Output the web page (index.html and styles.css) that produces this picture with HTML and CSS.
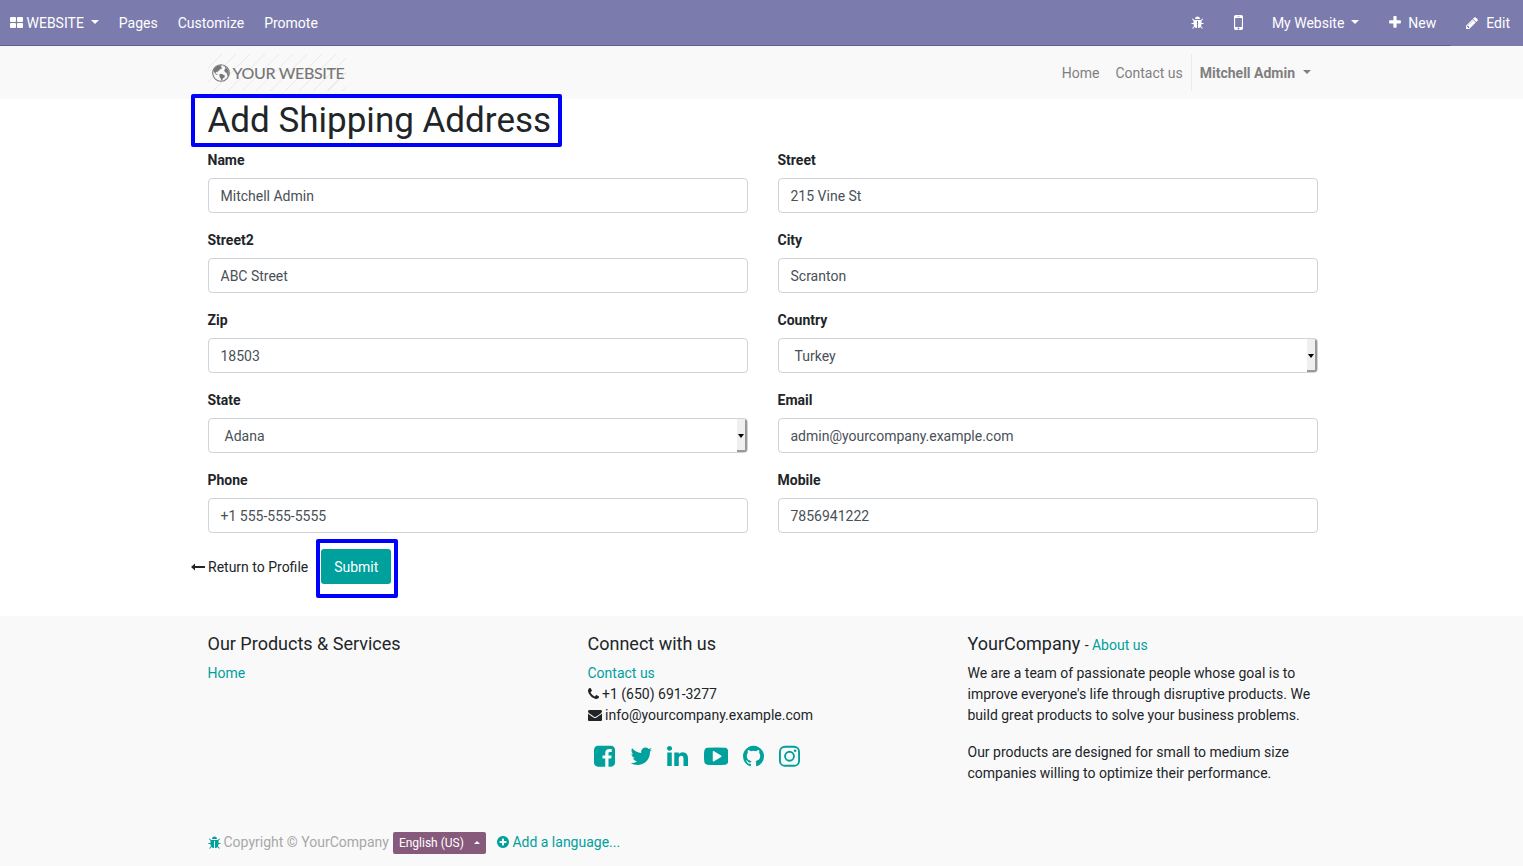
FILE: index.html
```html
<!DOCTYPE html>
<html lang="en">
<head>
<meta charset="utf-8">
<title>Add Shipping Address</title>
<link rel="stylesheet" href="styles.css">
</head>
<body>
<svg class="defs" aria-hidden="true">
  <symbol id="bug" viewBox="64 0 1664 1792"><path d="M1696 960q0 26-19 45t-45 19h-224q0 171-67 290l208 209q19 19 19 45t-19 45q-18 19-45 19t-45-19l-198-197q-5 5-15 13t-42 28.5-65 36.5-82 29-97 13v-896h-128v896q-51 0-101.5-13.5t-87-33-66-39-43.5-32.5l-15-14-183 207q-20 21-48 21-24 0-43-16-19-18-20.5-44.5t15.5-46.5l202-227q-58-114-58-274h-224q-26 0-45-19t-19-45 19-45 45-19h224v-294l-173-173q-19-19-19-45t19-45 45-19 45 19l173 173h844l173-173q19-19 45-19t45 19 19 45-19 45l-173 173v294h224q26 0 45 19t19 45zm-480-576h-640q0-133 93.5-226.5t226.5-93.5 226.5 93.5 93.5 226.5z"/></symbol>
</svg>

<nav class="topbar">
  <div class="topbar-menu">
    <a class="brand"><svg class="icon-grid" viewBox="0 0 13 11"><rect width="6" height="5" rx=".9"/><rect x="7" width="6" height="5" rx=".9"/><rect y="6" width="6" height="5" rx=".9"/><rect x="7" y="6" width="6" height="5" rx=".9"/></svg><span>WEBSITE</span><i class="caret"></i></a>
    <a>Pages</a><a>Customize</a><a>Promote</a>
  </div>
  <div class="topbar-tools">
    <a class="tool-bug"><svg class="icon-bug"><use href="#bug"/></svg></a>
    <a class="tool-mobile"><svg class="icon-mobile" viewBox="512 0 768 1792"><path d="M976 1408q0-33-23.5-56.5t-56.5-23.5-56.5 23.5-23.5 56.5 23.5 56.5 56.5 23.5 56.5-23.5 23.5-56.5zm208-160v-704q0-13-9.5-22.5t-22.5-9.5h-512q-13 0-22.5 9.5t-9.5 22.5v704q0 13 9.5 22.5t22.5 9.5h512q13 0 22.5-9.5t9.5-22.5zm-192-848q0-16-16-16h-160q-16 0-16 16t16 16h160q16 0 16-16zm288-16v1024q0 52-38 90t-90 38h-512q-52 0-90-38t-38-90v-1024q0-52 38-90t90-38h512q52 0 90 38t38 90z"/></svg></a>
    <a class="tool-site">My Website<i class="caret"></i></a>
    <a class="tool-new"><svg class="icon-plus" viewBox="192 0 1408 1792"><path d="M1600 736v192q0 40-28 68t-68 28h-416v416q0 40-28 68t-68 28h-192q-40 0-68-28t-28-68v-416h-416q-40 0-68-28t-28-68v-192q0-40 28-68t68-28h416v-416q0-40 28-68t68-28h192q40 0 68 28t28 68v416h416q40 0 68 28t28 68z"/></svg>New</a>
    <a class="tool-edit"><svg class="icon-pencil" viewBox="128 0 1536 1792"><path d="M491 1536l91-91-235-235-91 91v107h128v128h107zm523-928q0-22-22-22-10 0-17 7l-542 542q-7 7-7 17 0 22 22 22 10 0 17-7l542-542q7-7 7-17zm-54-192l416 416-832 832h-416v-416zm683 96q0 53-37 90l-166 166-416-416 166-165q36-38 90-38 53 0 91 38l235 234q37 39 37 91z"/></svg>Edit</a>
  </div>
</nav>

<header class="header">
  <div class="container header-row">
    <a class="logo">
      <svg class="globe" viewBox="0 0 18 18"><circle cx="9" cy="9" r="8.3" fill="none" stroke="#777" stroke-width="1.1"/><path d="M2.200 4.600 5 1.900l3.600-.8 1 .9-1.100.9 1.500.5-.4 1.400-1.800.4-.7 1.300-1.500.8.2 1-1.100-.5-1.100.6.3 1.300 1.400.3.6 1.100-1.200-.3-1.800-1.200L1.800 7.500z"/><path d="M7.300 10.400l1.500-.6 2.300.8 1.900 1.100-.6 1.700-1.400.8-.6 1.500-1.100 1-.5-2.300-1.200-1.400z"/><path d="M12.300 2l2.700 2.200 1.500 3 .3 3-1 2.400-.8-1.900-.2-1.800-1.300-.5-1.200-1.500.3-1.700 1.200-.8-.9-.8z"/></svg>
      <span>YOUR WEBSITE</span>
    </a>
    <div class="nav">
      <a>Home</a><a>Contact us</a><a class="user">Mitchell Admin<i class="caret"></i></a>
    </div>
  </div>
</header>

<main class="container main">
  <h1 class="title">Add Shipping Address</h1>
  <div class="form">
    <div class="group"><label>Name</label><div class="field">Mitchell Admin</div></div>
    <div class="group"><label>Street</label><div class="field">215 Vine St</div></div>
    <div class="group"><label>Street2</label><div class="field">ABC Street</div></div>
    <div class="group"><label>City</label><div class="field">Scranton</div></div>
    <div class="group"><label>Zip</label><div class="field">18503</div></div>
    <div class="group"><label>Country</label><div class="field select"><span>Turkey</span><i class="drop"></i></div></div>
    <div class="group"><label>State</label><div class="field select"><span>Adana</span><i class="drop"></i></div></div>
    <div class="group"><label>Email</label><div class="field">admin@yourcompany.example.com</div></div>
    <div class="group"><label>Phone</label><div class="field">+1 555-555-5555</div></div>
    <div class="group"><label>Mobile</label><div class="field">7856941222</div></div>
  </div>
  <div class="actions">
    <a class="back"><svg class="icon-back" viewBox="0 0 14 8"><path d="M4 .5v2.400h9.500q.5 0 .5.500v1.200q0 .5-.5.500H4v2.400L0 4z"/></svg>Return to Profile</a>
    <a class="submit">Submit</a>
  </div>
</main>

<footer class="footer">
  <div class="container">
    <div class="footer-cols">
      <section class="col">
        <h4>Our Products &amp; Services</h4>
        <a class="link">Home</a>
      </section>
      <section class="col">
        <h4>Connect with us</h4>
        <a class="link">Contact us</a>
        <div class="line"><svg class="icon-phone" viewBox="192 0 1408 1792"><path d="M1600 1240q0 27-10 70.500t-21 68.500q-21 50-122 106-94 51-186 51-27 0-53-3.500t-57.500-12.500-47-14.500-55.500-20.500-49-18q-98-35-175-83-127-79-264-216t-216-264q-48-77-83-175-3-9-18-49t-20.500-55.500-14.500-47-12.500-57.500-3.500-53q0-92 51-186 56-101 106-122 25-11 68.500-21t70.500-10q14 0 21 3 18 6 53 76 11 19 30 54t35 63.500 31 53.500q3 4 17.500 25t21.500 35.500 7 28.500q0 20-28.500 50t-62 55-62 53-28.500 46q0 9 5 22.500t8.500 20.500 14 24 11.500 19q76 137 174 235t235 174q2 1 19 11.500t24 14 20.500 8.500 22.500 5q18 0 46-28.500t53-62 55-62 50-28.500q14 0 28.500 7t35.500 21.500 25 17.500q25 15 53.500 31t63.500 35 54 30q70 35 76 53 3 7 3 21z"/></svg>+1 (650) 691-3277</div>
        <div class="line"><svg class="icon-mail" viewBox="0 0 1792 1792"><path d="M1792 710v794q0 66-47 113t-113 47h-1472q-66 0-113-47t-47-113v-794q44 49 101 87 362 246 497 345 57 42 92.500 65.500t94.500 48 110 24.500h2q51 0 110-24.500t94.500-48 92.500-65.500q170-123 498-345 57-39 100-87zm0-294q0 79-49 151t-122 123q-376 261-468 325-10 7-42.500 31t-54 38.500-52 32.500-57.500 27-50 9h-2q-23 0-50-9t-57.500-27-52-32.500-54-38.500-42.500-31q-91-64-262-182.500t-205-142.500q-62-42-117-115.500t-55-136.500q0-78 41.500-130t118.500-52h1472q65 0 112.500 47t47.500 113z"/></svg>info@yourcompany.example.com</div>
        <div class="social">
          <svg class="w-a" viewBox="128 0 1536 1792"><path d="M1376 128q119 0 203.500 84.500t84.500 203.500v960q0 119-84.500 203.500t-203.500 84.500h-188v-595h199l30-232h-229v-148q0-56 23.500-84t91.500-28l122-1v-207q-63-9-178-9-136 0-217.500 80t-81.500 226v171h-200v232h200v595h-532q-119 0-203.500-84.500t-84.500-203.500v-960q0-119 84.500-203.500t203.500-84.500h960z"/></svg>
          <svg class="w-b" viewBox="64 0 1664 1792"><path d="M1684 408q-67 98-162 167 1 14 1 42 0 130-38 259.500t-115.500 248.500-184.500 210.500-258 146-323 54.500q-271 0-496-145 35 4 78 4 225 0 401-138-105-2-188-64.500t-114-159.500q33 5 61 5 43 0 85-11-112-23-185.500-111.500t-73.500-205.500v-4q68 38 146 41-66-44-105-115t-39-154q0-88 44-163 121 149 294.500 238.500t371.500 99.500q-8-38-8-74 0-134 94.500-228.500t228.500-94.500q140 0 236 102 109-21 205-78-37 115-142 178 93-10 186-50z"/></svg>
          <svg class="w-a" viewBox="128 0 1536 1792"><path d="M477 625v991h-330v-991h330zm21-306q1 73-50.500 122t-135.500 49h-2q-82 0-132-49t-50-122q0-74 51.500-122.500t134.500-48.500 133 48.500 51 122.500zm1166 729v568h-329v-530q0-105-40.500-164.500t-126.500-59.500q-63 0-105.500 34.500t-63.500 85.500q-11 30-11 81v553h-329q2-399 2-647t-1-296l-1-48h329v144h-2q20-32 41-56t56.500-52 87-43.500 114.500-15.500q171 0 275 113.500t104 332.500z"/></svg>
          <svg class="w-c" viewBox="0 0 1792 1792"><path d="M1280 896q0-37-30-54l-512-320q-31-20-65-2-33 18-33 56v640q0 38 33 56 16 8 31 8 20 0 34-10l512-320q30-17 30-54zm512 0q0 96-1 150t-8.500 136.500-22.500 147.500q-16 73-69 123t-124 58q-222 25-671 25t-671-25q-71-8-124.500-58t-69.500-123q-14-65-21.500-147.500t-8.500-136.500-1-150 1-150 8.500-136.500 22.500-147.500q16-73 69-123t124-58q222-25 671-25t671 25q71 8 124.500 58t69.500 123q14 65 21.500 147.500t8.500 136.500 1 150z"/></svg>
          <svg class="w-a" viewBox="128 0 1536 1792"><path d="M896 128q209 0 385.500 103t279.500 279.500 103 385.500q0 251-146.500 451.500t-378.500 277.500q-27 5-40-7t-13-30q0-3 .5-76.500t.5-134.500q0-97-52-142 57-6 102.500-18t94-39 81-66.500 53-105 20.500-150.500q0-119-79-206 37-91-8-204-28-9-81 11t-92 44l-38 24q-93-26-192-26t-192 26q-16-11-42.500-27t-83.500-38.500-85-13.500q-45 113-8 204-79 87-79 206 0 85 20.500 150t52.500 105 80.500 67 94 39 102.500 18q-39 36-49 103-21 10-45 15t-57 5-65.500-21.500-55.500-62.500q-19-32-48.500-52t-49.500-24l-20-3q-21 0-29 4.500t-5 11.500 9 14 13 12l7 5q22 10 43.500 38t31.500 51l10 23q13 38 44 61.500t67 30 69.500 7 55.500-3.500l23-4q0 38 .5 88.500t.5 54.500q0 18-13 30t-40 7q-232-77-378.500-277.500t-146.500-451.500q0-209 103-385.500t279.500-279.500 385.500-103z"/></svg>
          <svg class="w-a" viewBox="128 0 1536 1792"><g fill="none" stroke="currentColor"><rect x="197" y="197" width="1398" height="1398" rx="370" stroke-width="138"/><circle cx="896" cy="896" r="325" stroke-width="138"/></g><circle cx="1306" cy="486" r="92"/></svg>
        </div>
      </section>
      <section class="col">
        <h4>YourCompany <small>- <a class="link">About us</a></small></h4>
        <p>We are a team of passionate people whose goal is to improve everyone's life through disruptive products. We build great products to solve your business problems.</p>
        <p>Our products are designed for small to medium size companies willing to optimize their performance.</p>
      </section>
    </div>
    <div class="legal">
      <svg class="icon-bug"><use href="#bug"/></svg>
      <span class="copy">Copyright © YourCompany</span>
      <span class="lang">English (US)<i class="caret up"></i></span>
      <a class="link add"><svg class="icon-add" viewBox="128 0 1536 1792"><path d="M1344 960v-128q0-26-19-45t-45-19h-256v-256q0-26-19-45t-45-19h-128q-26 0-45 19t-19 45v256h-256q-26 0-45 19t-19 45v128q0 26 19 45t45 19h256v256q0 26 19 45t45 19h128q26 0 45-19t19-45v-256h256q26 0 45-19t19-45zm320-64q0 209-103 385.500t-279.500 279.500-385.500 103-385.500-103-279.500-279.500-103-385.500 103-385.500 279.500-279.500 385.500-103 385.500 103 279.500 279.500 103 385.500z"/></svg>Add a language...</a>
    </div>
  </div>
</footer>
</body>
</html>
```

FILE: styles.css
```css
*, *::before, *::after { box-sizing: border-box; }
body {
  margin: 0;
  height: 866px;
  display: flex;
  flex-direction: column;
  overflow: hidden;
  font: 14px/21px Roboto, "Liberation Sans", sans-serif;
  color: #212529;
  background: #fff;
}
svg { fill: currentColor; flex: none; }
.defs { position: absolute; width: 0; height: 0; }
.container { width: 1110px; margin-left: 207.5px; }
.caret {
  display: inline-block;
  width: 8px;
  height: 4px;
  border: 4px solid transparent;
  border-top-color: currentColor;
  border-bottom: 0;
}
.caret.up { width: 6px; height: 3px; border: 3px solid transparent; border-top: 0; border-bottom-color: currentColor; }

/* Editor bar */
.topbar {
  position: relative;
  flex: none;
  height: 46px;
  display: flex;
  justify-content: space-between;
  align-items: center;
  padding: 0 13px 0 10px;
  color: #fff;
  background: #7c7bad;
}
.topbar::after {
  content: "";
  position: absolute;
  left: 0;
  bottom: 0;
  width: 1451px;
  height: 1px;
  background: #5f5e97;
}
.topbar-menu, .topbar-tools { display: flex; align-items: center; }
.topbar-menu { gap: 20px; }
.topbar a { display: flex; align-items: center; }
.brand .caret { margin-left: 7px; margin-top: -2px; }
.icon-grid { width: 13px; height: 11px; margin-right: 3.500px; margin-top: -1px; }
.icon-bug { width: 13px; height: 14px; }
.topbar .icon-bug { margin-top: -1px; }
.icon-mobile { width: 9px; height: 21px; margin-top: -1px; }
.tool-mobile { margin-left: 30px; }
.tool-site { margin-left: 29px; }
.tool-site .caret { margin-left: 7px; margin-top: -2px; }
.tool-new { margin-left: 29.500px; }
.icon-plus { width: 12px; height: 15px; margin-right: 7.500px; margin-top: -1px; }
.tool-edit { margin-left: 30px; }
.icon-pencil { width: 12px; height: 14px; margin-right: 8px; }

/* Site header */
.header { flex: none; height: 52.500px; background: #f9f9f9; }
.header-row { display: flex; justify-content: space-between; align-items: center; height: 100%; padding-right: 7px; }
.logo {
  display: flex;
  align-items: center;
  width: 138px;
  height: 37px;
  padding-left: 4px;
  gap: 3px;
  white-space: nowrap;
  font: 500 16px/20px Lato, sans-serif;
  letter-spacing: -.36px;
  color: #777;
  background: repeating-linear-gradient(135deg, transparent 0 9.300px, #e9e9e9 9.300px 10.100px);
}
.logo span { padding-top: 1px; }
.globe { width: 18px; height: 18px; margin-top: 1px; }
.nav { display: flex; align-items: center; color: #808080; }
.nav a { padding-top: 2px; margin-right: 16px; }
.nav a:nth-child(2) { margin-right: 8px; }
.nav .user {
  display: flex;
  align-items: center;
  height: 37px;
  margin: 0;
  padding-left: 8px;
  border-left: 1px solid #e9ecef;
  font-weight: 700;
}
.user .caret { margin-left: 7.500px; margin-top: -2px; }

/* Address form */
.main { flex: none; height: 517.500px; padding-top: 1px; }
.title {
  position: relative;
  margin: 0 0 8.500px;
  font-size: 35px;
  line-height: 42px;
  font-weight: 400;
}
.title::after, .submit::after {
  content: "";
  position: absolute;
  border: 4px solid #0000fe;
  border-radius: 2px;
}
.title::after { left: -16.500px; top: -5.500px; width: 371px; height: 53px; }
.form { display: grid; grid-template-columns: 540px 540px; column-gap: 30px; }
.group { height: 80px; }
.group label { display: block; height: 28px; font-weight: 700; }
.field {
  display: flex;
  height: 35px;
  padding: 7px 12px 5px;
  border: 1px solid #ced4da;
  border-radius: 4px;
  color: #495057;
}
.select { justify-content: space-between; padding: 0 0 0 16px; overflow: hidden; }
.select span { padding-top: 7px; }
.drop {
  width: 10px;
  display: flex;
  align-items: center;
  justify-content: center;
  background: #efefef;
  border-right: 2px solid #999;
  border-bottom: 2px solid #999;
}
.drop::before { content: ""; width: 6px; height: 4px; margin: 2px 0 0 1px; flex: none; border: 3px solid transparent; border-top: 4px solid #000; border-bottom: 0; }
.actions { display: flex; align-items: center; height: 35px; margin: -1px 0 0 -16.500px; }
.back { display: flex; align-items: center; padding-top: 1px; }
.icon-back { width: 14px; height: 8px; margin-right: 3px; }
.submit {
  position: relative;
  margin-left: 13px;
  width: 70px;
  height: 35px;
  line-height: 36px;
  text-align: center;
  color: #fff;
  background: #00a09d;
  border-radius: 3px;
}
.submit::after { left: -5px; top: -10px; width: 82px; height: 59px; }

/* Footer */
.footer { flex: 1; background: #f9f9f9; padding-top: 17px; }
.footer-cols { display: grid; grid-template-columns: 350px 350px 350px; column-gap: 30px; height: 199px; }
.col h4 { height: 22px; margin: 0 0 7.500px; font-size: 18px; line-height: 22px; font-weight: 400; }
.col h4 small { font-size: 14px; }
.col p { margin: 0 0 16px; }
.link { color: #00a09d; }
.line { display: flex; align-items: center; }
.icon-phone { width: 11px; height: 14px; margin-right: 3.500px; margin-top: -1px; }
.icon-mail { width: 14px; height: 14px; margin-right: 3.500px; margin-top: -1px; }
.social { display: flex; margin: 18px 0 0 6px; color: #00a09d; }
.social svg { height: 24.500px; margin-right: 15.200px; }
.social .w-a { width: 21px; }
.social .w-b { width: 22.750px; margin-right: 15px; }
.social .w-c { width: 24.500px; margin-right: 15px; }
.legal { display: flex; align-items: center; color: #00a09d; height: 22px; }
.legal .icon-bug, .icon-add { margin-top: -1px; }
.copy { margin: -2px 0 0 3px; color: #a8a8a8; }
.lang {
  display: flex;
  align-items: center;
  width: 93px;
  height: 22px;
  margin-left: 4px;
  padding-left: 6px;
  border-radius: 2px;
  font-size: 12px;
  color: #fff;
  background: #875a7b;
}
.lang .caret { margin-left: 10px; margin-top: -2px; }
.add { display: flex; align-items: center; margin: -2px 0 0 11px; }
.icon-add { width: 12px; height: 14px; margin-right: 3.500px; }
```
